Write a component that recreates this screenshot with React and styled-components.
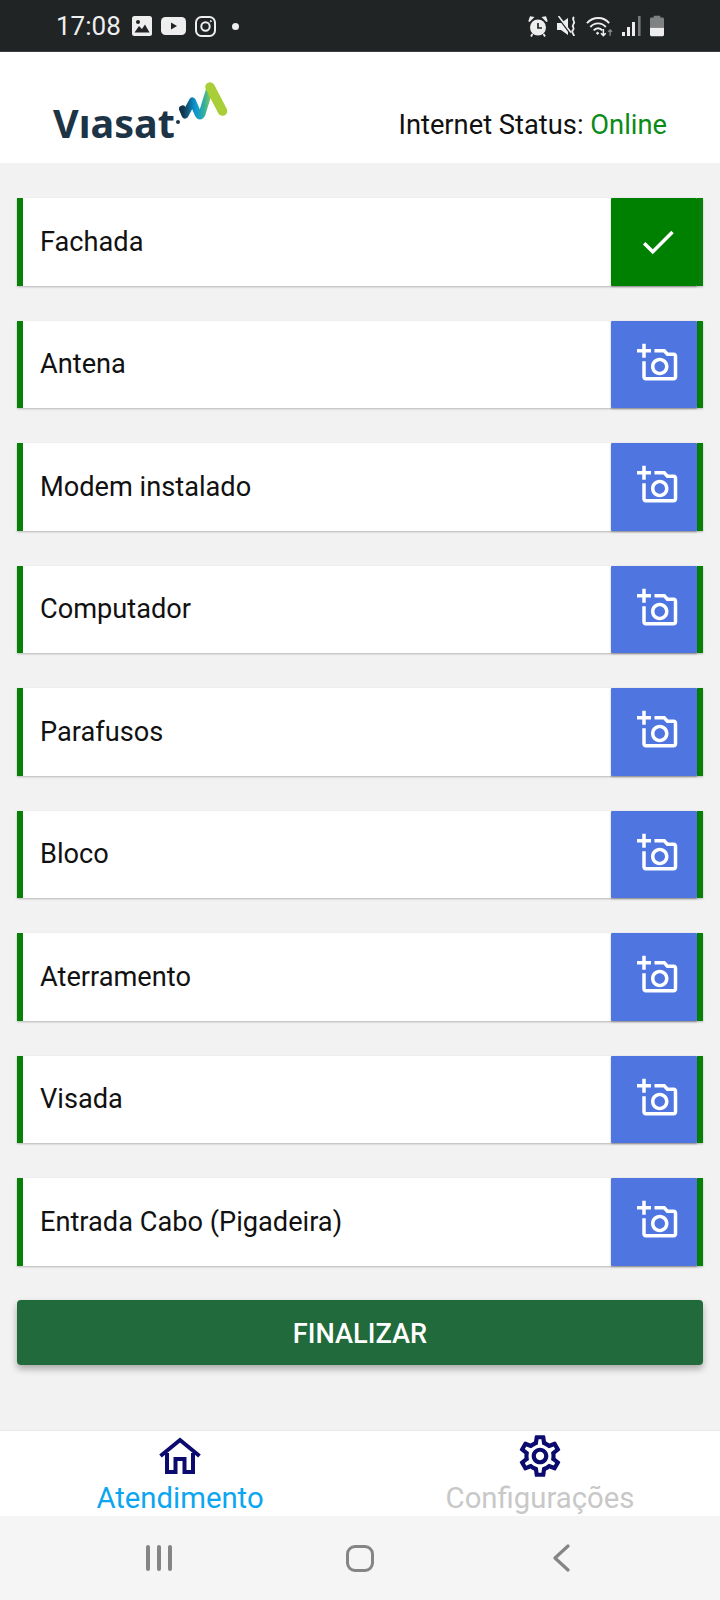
import React from "react"
import styled, { createGlobalStyle } from "styled-components"

const items = [
  { label: "Fachada", done: true },
  { label: "Antena" },
  { label: "Modem instalado" },
  { label: "Computador" },
  { label: "Parafusos" },
  { label: "Bloco" },
  { label: "Aterramento" },
  { label: "Visada" },
  { label: "Entrada Cabo (Pigadeira)" },
]

const GEAR =
  "M19.43 12.98c.04-.32.07-.64.07-.98 0-.34-.03-.66-.07-.98l2.11-1.65c.19-.15.24-.42.12-.64l-2-3.46c-.09-.16-.26-.25-.44-.25-.06 0-.12.01-.17.03l-2.49 1c-.52-.4-1.08-.73-1.69-.98l-.38-2.65C14.46 2.18 14.25 2 14 2h-4c-.25 0-.46.18-.49.42l-.38 2.65c-.61.25-1.17.59-1.69.98l-2.49-1c-.06-.02-.12-.03-.18-.03-.17 0-.34.09-.43.25l-2 3.46c-.13.22-.07.49.12.64l2.11 1.65c-.04.32-.07.65-.07.98 0 .33.03.66.07.98l-2.11 1.65c-.19.15-.24.42-.12.64l2 3.46c.09.16.26.25.44.25.06 0 .12-.01.17-.03l2.49-1c.52.4 1.08.73 1.69.98l.38 2.65c.03.24.24.42.49.42h4c.25 0 .46-.18.49-.42l.38-2.65c.61-.25 1.17-.59 1.69-.98l2.49 1c.06.02.12.03.18.03.17 0 .34-.09.43-.25l2-3.46c.12-.22.07-.49-.12-.64l-2.11-1.65zm-1.98-1.71c.04.31.05.52.05.73 0 .21-.02.43-.05.73l-.14 1.13.89.7 1.08.84-.7 1.21-1.27-.51-1.04-.42-.9.68c-.43.32-.84.56-1.25.73l-1.06.43-.16 1.13-.2 1.35h-1.4l-.19-1.35-.16-1.13-1.06-.43c-.43-.18-.83-.41-1.23-.71l-.91-.7-1.06.43-1.27.51-.7-1.21 1.08-.84.89-.7-.14-1.13c-.03-.31-.05-.54-.05-.74s.02-.43.05-.73l.14-1.13-.89-.7-1.08-.84.7-1.21 1.27.51 1.04.42.9-.68c.43-.32.84-.56 1.25-.73l1.06-.43.16-1.13.2-1.35h1.39l.19 1.35.16 1.13 1.06.43c.43.18.83.41 1.23.71l.91.7 1.06-.43 1.27-.51.7 1.21-1.07.85-.89.7.14 1.13zM12 8c-2.21 0-4 1.79-4 4s1.79 4 4 4 4-1.79 4-4-1.79-4-4-4zm0 6c-1.1 0-2-.9-2-2s.9-2 2-2 2 .9 2 2-.9 2-2 2z"

const CameraIcon = () => (
  <CameraSvg width="42" height="42" viewBox="0 0 24 24" fill="#fff">
    <path d="M21 6h-3.17L16 4h-6v2h5.12l1.83 2H21v12H5v-9H3v9c0 1.1.9 2 2 2h16c1.1 0 2-.9 2-2V8c0-1.1-.9-2-2-2zM8 14c0 2.76 2.24 5 5 5s5-2.24 5-5-2.24-5-5-5-5 2.24-5 5zm5-3c1.65 0 3 1.35 3 3s-1.35 3-3 3-3-1.35-3-3 1.35-3 3-3zM5 6h3V4H5V1H3v3H0v2h3v3h2z" />
  </CameraSvg>
)

const CheckIcon = () => (
  <svg width="42" height="42" viewBox="0 0 24 24" fill="#fff">
    <path d="M9 16.17L4.83 12l-1.42 1.41L9 19 21 7l-1.41-1.41z" />
  </svg>
)

const HomeIcon = () => (
  <svg width="44" height="40" viewBox="8 4 44 40" fill="none" stroke="#0b0b6f" strokeWidth="4">
    <path d="M10.500 24 30 8l19.500 16" />
    <path d="M17 21v19h8.500V27h9v13H43V21" />
  </svg>
)

const GearIcon = () => (
  <svg width="50" height="50" viewBox="0 0 24 24" fill="#0b0b6f">
    <path d={GEAR} />
  </svg>
)

const GalleryIcon = () => (
  <svg width="20" height="20" viewBox="0 0 20 20">
    <rect width="20" height="20" rx="2.5" fill="#eee" />
    <circle cx="6" cy="6" r="2" fill="#212425" />
    <path d="M2.500 16.500 7 10l3 3 3-4.500 4.500 8z" fill="#212425" />
  </svg>
)

const YoutubeIcon = () => (
  <svg width="25" height="18" viewBox="0 0 25 18">
    <rect width="25" height="18" rx="4.5" fill="#eee" />
    <path d="M10 5.500v7l6-3.500z" fill="#212425" />
  </svg>
)

const InstagramIcon = () => (
  <svg width="21" height="21" viewBox="0 0 21 21" fill="none" stroke="#eee" strokeWidth="2">
    <rect x="1" y="1" width="19" height="19" rx="5.5" />
    <circle cx="10.5" cy="10.5" r="4.2" />
    <circle cx="15.8" cy="5.2" r="0.6" fill="#eee" strokeWidth="1" />
  </svg>
)

const AlarmIcon = () => (
  <svg width="20" height="21" viewBox="0 0 20 21">
    <circle cx="10" cy="11.5" r="8" fill="#eee" />
    <path d="M10 7v5h4" fill="none" stroke="#212425" strokeWidth="1.7" />
    <path d="M1 5.500 5 1.500 2.500 1zM19 5.500 15 1.500 17.500 1z" fill="#eee" stroke="#eee" strokeWidth="1.5" />
    <path d="M4.500 18 3 20.500M15.500 18 17 20.500" stroke="#eee" strokeWidth="1.8" />
  </svg>
)

const MuteIcon = () => (
  <svg width="20" height="21" viewBox="0 0 20 21">
    <path d="M0 7h4l7-5v17l-7-5H0z" fill="#eee" />
    <path d="M1 1 13 17" stroke="#212425" strokeWidth="2" />
    <path d="M1.500 0 14 16.500" stroke="#eee" strokeWidth="1.6" />
    <path d="M17 1c-3 3 2 4-.5 7s2 4-.5 6 1 4 1 6" fill="none" stroke="#eee" strokeWidth="1.8" />
  </svg>
)

const WifiIcon = () => (
  <svg width="27" height="21" viewBox="0 0 28 21" fill="none" stroke="#eee" strokeWidth="2">
    <path d="M1 7c6.500-7 17-7 23 0" />
    <path d="M4.500 11c4.500-5 11.500-5 16 0" />
    <path d="M8 14.500c2.500-3 6.500-3 9 0" />
    <circle cx="12" cy="17.5" r="1" fill="#eee" strokeWidth="1" />
    <path d="M18 13v7M15.500 17.500 18 20l2.500-2.500" strokeWidth="1.6" />
    <path d="M25 20v-6M23 16l2-2 2 2" stroke="#8b8d8d" strokeWidth="1.4" />
  </svg>
)

const SignalIcon = () => (
  <svg width="19" height="20" viewBox="0 0 19 20">
    <rect x="0" y="16" width="3" height="4" fill="#eee" />
    <rect x="5" y="11" width="3" height="9" fill="#eee" />
    <rect x="10" y="6" width="3" height="14" fill="#eee" />
    <rect x="16" y="0" width="2.6" height="20" fill="#77797a" />
  </svg>
)

const BatteryIcon = () => (
  <svg width="14" height="22" viewBox="0 0 15 22">
    <path d="M4 0h7v2h2.500q1.500 0 1.500 1.500V13H0V3.500Q0 2 1.500 2H4z" fill="#808282" />
    <path d="M0 13h15v7.500q0 1.500-1.500 1.500h-12Q0 22 0 20.500z" fill="#eee" />
  </svg>
)

const LogoWave = () => (
  <svg width="50" height="40" viewBox="10 3 50 40" fill="none" strokeLinecap="round" strokeLinejoin="round">
    <defs>
      <linearGradient id="wave" gradientUnits="userSpaceOnUse" x1="14" y1="0" x2="44" y2="0">
        <stop offset="0" stopColor="#14344c" />
        <stop offset="0.4" stopColor="#0b94d2" />
        <stop offset="0.7" stopColor="#2fb0a0" />
        <stop offset="1" stopColor="#a9cf38" />
      </linearGradient>
    </defs>
    <path d="M13.500 31l2.500 6 7.500-14 5.500 13q2 4 4 0l8-26" stroke="url(#wave)" strokeWidth="7" />
    <path d="M41 9l12.500 24" stroke="#a9cf38" strokeWidth="9.500" />
  </svg>
)

const App = () => {
  return (
    <Page>
      <GlobalStyle />
      <StatusBar>
        <StatusGroup>
          <Clock>17:08</Clock>
          <GalleryIcon />
          <YoutubeIcon />
          <InstagramIcon />
          <Dot />
        </StatusGroup>
        <StatusGroup>
          <AlarmIcon />
          <MuteIcon />
          <WifiIcon />
          <SignalIcon />
          <BatteryIcon />
        </StatusGroup>
      </StatusBar>
      <Header>
        <Logo>
          <LogoText>Vıasat</LogoText>
          <LogoDot />
          <WaveSlot>
            <LogoWave />
          </WaveSlot>
        </Logo>
        <InternetStatus>
          Internet Status: <Online>Online</Online>
        </InternetStatus>
      </Header>
      <Main>
        <List>
          {items.map((item) => (
            <Row key={item.label}>
              <RowLabel>{item.label}</RowLabel>
              <RowButton $done={item.done}>
                {item.done ? <CheckIcon /> : <CameraIcon />}
              </RowButton>
            </Row>
          ))}
        </List>
        <FinishButton>FINALIZAR</FinishButton>
      </Main>
      <TabBar>
        <Tab>
          <TabIcon>
            <HomeIcon />
          </TabIcon>
          <TabLabel $active>Atendimento</TabLabel>
        </Tab>
        <Tab>
          <TabIcon>
            <GearIcon />
          </TabIcon>
          <TabLabel>Configurações</TabLabel>
        </Tab>
      </TabBar>
      <SystemNav>
        <RecentBars>
          <span />
          <span />
          <span />
        </RecentBars>
        <HomeKey />
        <svg width="18" height="28" viewBox="0 0 18 28" fill="none" stroke="#858585" strokeWidth="3.200">
          <path d="M16 2 3 14l13 12" strokeLinecap="round" strokeLinejoin="round" />
        </svg>
      </SystemNav>
    </Page>
  )
}

export default App

const GlobalStyle = createGlobalStyle`
  html, body {
    margin: 0;
    padding: 0;
  }
  body {
    font-family: Roboto, "Liberation Sans", sans-serif;
  }
`

const Page = styled.div`
  width: 720px;
  height: 1600px;
  display: flex;
  flex-direction: column;
  background: #f2f2f2;
  overflow: hidden;
`

const StatusBar = styled.div`
  height: 52px;
  box-sizing: border-box;
  flex-shrink: 0;
  display: flex;
  justify-content: space-between;
  align-items: center;
  padding: 1px 56px 0 56px;
  background: #212425;
  border-bottom: 1px solid #3c3e3f;
`

const StatusGroup = styled.div`
  display: flex;
  align-items: center;
  gap: 9px;
`

const Clock = styled.span`
  color: #eee;
  font-size: 26px;
  margin: -1px 2px 0 0;
`

const Dot = styled.span`
  width: 7px;
  height: 7px;
  margin-left: 7px;
  border-radius: 50%;
  background: #eee;
`

const Header = styled.header`
  height: 111px;
  flex-shrink: 0;
  box-sizing: border-box;
  display: flex;
  justify-content: space-between;
  align-items: flex-end;
  padding: 0 53px 22px 53px;
  background: #fff;
`

const Logo = styled.div`
  display: flex;
  align-items: flex-end;
`

const LogoText = styled.span`
  font-family: "Noto Sans", sans-serif;
  font-weight: 700;
  font-size: 39.5px;
  line-height: 36px;
  color: #1d3346;
`

const LogoDot = styled.span`
  width: 4px;
  height: 4px;
  margin: 0 0 17px 1px;
  background: #1d3346;
  border-radius: 50%;
`

const WaveSlot = styled.div`
  display: flex;
  margin: 0 0 20px -1px;
`

const InternetStatus = styled.div`
  font-size: 27.3px;
  line-height: 32px;
  color: #111;
`

const Online = styled.span`
  color: #0a8a16;
`

const Main = styled.main`
  flex: 1;
  box-sizing: border-box;
  padding: 35px 17px 0;
`

const List = styled.div`
  display: flex;
  flex-direction: column;
  gap: 35px;
`

const Row = styled.div`
  position: relative;
  height: 87.5px;
  box-sizing: border-box;
  display: flex;
  align-items: center;
  justify-content: space-between;
  background: #fff;
  border-left: 6px solid #078007;
  border-right: 6px solid #078007;
  box-shadow: 0 1px 2px rgba(0, 0, 0, 0.25);
`

const RowLabel = styled.span`
  padding-left: 17px;
  font-size: 27.2px;
  color: #111;
`

const RowButton = styled.button`
  width: 86px;
  height: 100%;
  flex-shrink: 0;
  padding: 0 0 0 8px;
  border: none;
  border-radius: 1px;
  display: flex;
  align-items: center;
  justify-content: center;
  background: ${(p) => (p.$done ? "#008000" : "#4f75e0")};
  box-shadow: 0 1px 2px rgba(0, 0, 0, 0.3);
`

const CameraSvg = styled.svg`
  margin-bottom: 3px;
`

const FinishButton = styled.button`
  display: block;
  width: 100%;
  height: 65px;
  margin-top: 34px;
  padding: 3px 0 0;
  border: none;
  border-radius: 4px;
  background: #206a3b;
  color: #fff;
  font-family: inherit;
  font-size: 27.2px;
  font-weight: 500;
  box-shadow: 0 4px 7px rgba(0, 0, 0, 0.3);
`

const TabBar = styled.nav`
  height: 86px;
  flex-shrink: 0;
  display: flex;
  background: #fff;
  border-top: 1px solid #e8e8e8;
  box-sizing: border-box;
  overflow: hidden;
`

const Tab = styled.div`
  flex: 1;
  display: flex;
  flex-direction: column;
  align-items: center;
`

const TabIcon = styled.div`
  height: 50px;
  display: flex;
  align-items: center;
  justify-content: center;
`

const TabLabel = styled.span`
  font-size: 29.3px;
  line-height: 34px;
  color: ${(p) => (p.$active ? "#0ba5f0" : "#c8c8c8")};
`

const SystemNav = styled.div`
  height: 84px;
  flex-shrink: 0;
  display: grid;
  grid-template-columns: repeat(3, 201px);
  justify-content: center;
  justify-items: center;
  align-items: center;
  background: #f5f5f5;
`

const RecentBars = styled.div`
  display: flex;
  gap: 7px;
  span {
    width: 4px;
    height: 26px;
    border-radius: 2px;
    background: #858585;
  }
`

const HomeKey = styled.div`
  width: 28px;
  height: 27px;
  box-sizing: border-box;
  border: 3.5px solid #858585;
  border-radius: 9px;
`
